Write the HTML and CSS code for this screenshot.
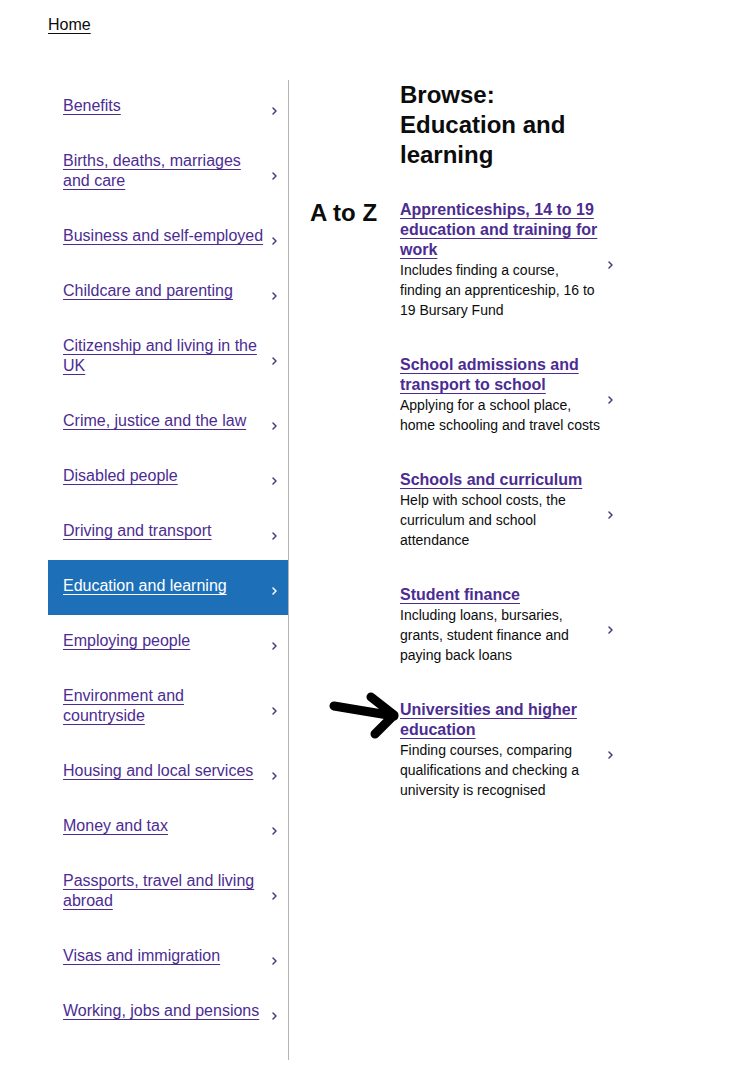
FILE: index.html
```html
<!DOCTYPE html>
<html lang="en">
<head>
<meta charset="utf-8">
<title>Browse: Education and learning</title>
<link rel="stylesheet" href="styles.css">
</head>
<body>
<div class="page">
  <nav class="breadcrumb"><a href="#" class="home-link">Home</a></nav>
  <div class="layout">
    <ul class="nav">
      <li><a href="#" class="nav-item"><span class="nav-text">Benefits</span><svg class="chev" viewBox="0 0 5 8"><polyline points="1,1 4,4 1,7"/></svg></a></li>
      <li><a href="#" class="nav-item"><span class="nav-text">Births, deaths, marriages and care</span><svg class="chev" viewBox="0 0 5 8"><polyline points="1,1 4,4 1,7"/></svg></a></li>
      <li><a href="#" class="nav-item"><span class="nav-text">Business and self-employed</span><svg class="chev" viewBox="0 0 5 8"><polyline points="1,1 4,4 1,7"/></svg></a></li>
      <li><a href="#" class="nav-item"><span class="nav-text">Childcare and parenting</span><svg class="chev" viewBox="0 0 5 8"><polyline points="1,1 4,4 1,7"/></svg></a></li>
      <li><a href="#" class="nav-item"><span class="nav-text">Citizenship and living in the UK</span><svg class="chev" viewBox="0 0 5 8"><polyline points="1,1 4,4 1,7"/></svg></a></li>
      <li><a href="#" class="nav-item"><span class="nav-text">Crime, justice and the law</span><svg class="chev" viewBox="0 0 5 8"><polyline points="1,1 4,4 1,7"/></svg></a></li>
      <li><a href="#" class="nav-item"><span class="nav-text">Disabled people</span><svg class="chev" viewBox="0 0 5 8"><polyline points="1,1 4,4 1,7"/></svg></a></li>
      <li><a href="#" class="nav-item"><span class="nav-text">Driving and transport</span><svg class="chev" viewBox="0 0 5 8"><polyline points="1,1 4,4 1,7"/></svg></a></li>
      <li><a href="#" class="nav-item active"><span class="nav-text">Education and learning</span><svg class="chev" viewBox="0 0 5 8"><polyline points="1,1 4,4 1,7"/></svg></a></li>
      <li><a href="#" class="nav-item"><span class="nav-text">Employing people</span><svg class="chev" viewBox="0 0 5 8"><polyline points="1,1 4,4 1,7"/></svg></a></li>
      <li><a href="#" class="nav-item"><span class="nav-text">Environment and countryside</span><svg class="chev" viewBox="0 0 5 8"><polyline points="1,1 4,4 1,7"/></svg></a></li>
      <li><a href="#" class="nav-item"><span class="nav-text">Housing and local services</span><svg class="chev" viewBox="0 0 5 8"><polyline points="1,1 4,4 1,7"/></svg></a></li>
      <li><a href="#" class="nav-item"><span class="nav-text">Money and tax</span><svg class="chev" viewBox="0 0 5 8"><polyline points="1,1 4,4 1,7"/></svg></a></li>
      <li><a href="#" class="nav-item"><span class="nav-text">Passports, travel and living abroad</span><svg class="chev" viewBox="0 0 5 8"><polyline points="1,1 4,4 1,7"/></svg></a></li>
      <li><a href="#" class="nav-item"><span class="nav-text">Visas and immigration</span><svg class="chev" viewBox="0 0 5 8"><polyline points="1,1 4,4 1,7"/></svg></a></li>
      <li><a href="#" class="nav-item"><span class="nav-text">Working, jobs and pensions</span><svg class="chev" viewBox="0 0 5 8"><polyline points="1,1 4,4 1,7"/></svg></a></li>
    </ul>
    <main class="main">
      <h1 class="title">Browse:<br>Education and learning</h1>
      <ul class="topics">
        <li><a href="#" class="topic"><span class="topic-body"><span class="topic-title">Apprenticeships, 14 to 19 education and training for work</span><span class="topic-desc">Includes finding a course, finding an apprenticeship, 16 to 19 Bursary Fund</span></span><svg class="chev" viewBox="0 0 5 8"><polyline points="1,1 4,4 1,7"/></svg></a></li>
        <li><a href="#" class="topic"><span class="topic-body"><span class="topic-title">School admissions and transport to school</span><span class="topic-desc">Applying for a school place, home schooling and travel costs</span></span><svg class="chev" viewBox="0 0 5 8"><polyline points="1,1 4,4 1,7"/></svg></a></li>
        <li><a href="#" class="topic"><span class="topic-body"><span class="topic-title">Schools and curriculum</span><span class="topic-desc">Help with school costs, the curriculum and school attendance</span></span><svg class="chev" viewBox="0 0 5 8"><polyline points="1,1 4,4 1,7"/></svg></a></li>
        <li><a href="#" class="topic"><span class="topic-body"><span class="topic-title">Student finance</span><span class="topic-desc">Including loans, bursaries, grants, student finance and paying back loans</span></span><svg class="chev" viewBox="0 0 5 8"><polyline points="1,1 4,4 1,7"/></svg></a></li>
        <li><a href="#" class="topic"><span class="topic-body"><span class="topic-title">Universities and higher education</span><span class="topic-desc">Finding courses, comparing qualifications and checking a university is recognised</span></span><svg class="chev" viewBox="0 0 5 8"><polyline points="1,1 4,4 1,7"/></svg></a></li>
      </ul>
    </main>
    <div class="atoz">A to Z</div>
    <svg class="arrow" viewBox="0 0 75 50" width="75" height="50"><path d="M6 16 L66 26 M43 7 L66 25 L47 44"/></svg>
  </div>
</div>
</body>
</html>
```

FILE: styles.css
```css
* { box-sizing: border-box; }
body {
  margin: 0;
  background: #ffffff;
  color: #0b0c0c;
  font-family: "Liberation Sans", Arial, sans-serif;
}
.page {
  padding: 15px 0 20px 48px;
}
.breadcrumb {
  font-size: 16px;
  line-height: 20px;
}
.home-link {
  color: #0b0c0c;
  text-decoration: underline;
  text-decoration-thickness: 1px;
  text-underline-offset: 3px;
}
.layout {
  position: relative;
  display: flex;
  margin-top: 45px;
}
.nav {
  list-style: none;
  margin: 0;
  padding: 0 0 20px 0;
  width: 241px;
  flex: none;
  border-right: 1px solid #b1b4b6;
}
.nav-item {
  display: flex;
  align-items: center;
  justify-content: space-between;
  padding: 16px 11px 19px 15px;
  font-size: 16px;
  line-height: 20px;
  color: #4c2c92;
  text-decoration: none;
}
.nav-text {
  width: 204px;
  text-decoration: underline;
  text-decoration-thickness: 1px;
  text-underline-offset: 3px;
}
.chev {
  width: 5px;
  height: 8px;
  flex: none;
  margin-top: 10px;
  fill: none;
  stroke: #46407a;
  stroke-width: 1.5;
  stroke-linecap: round;
  stroke-linejoin: round;
}
.nav-item.active {
  background: #1d70b8;
  color: #ffffff;
}
.nav-item.active .chev {
  stroke: #ffffff;
}
.main {
  padding: 0 0 0 111px;
}
.title {
  margin: 0 0 12.5px 0;
  font-size: 24px;
  line-height: 30px;
  font-weight: 700;
  width: 200px;
}
.topics {
  list-style: none;
  margin: 0;
  padding: 0;
}
.topic {
  display: flex;
  align-items: center;
  gap: 6px;
  width: 215px;
  padding: 17.5px 0;
  text-decoration: none;
  color: #0b0c0c;
}
.topic-body {
  display: flex;
  flex-direction: column;
  width: 202px;
  flex: none;
}
.topic-title {
  font-size: 16px;
  line-height: 20px;
  font-weight: 700;
  color: #4c2c92;
  text-decoration: underline;
  text-decoration-thickness: 1px;
  text-underline-offset: 3px;
}
.topic-desc {
  font-size: 14px;
  line-height: 20px;
  color: #0b0c0c;
}
.atoz {
  position: absolute;
  left: 262px;
  top: 121px;
  font-size: 24px;
  line-height: 24px;
  font-weight: 700;
  color: #0b0c0c;
}
.arrow {
  position: absolute;
  left: 280px;
  top: 610px;
  fill: none;
  stroke: #000000;
  stroke-width: 9;
  stroke-linecap: round;
  stroke-linejoin: round;
}
```
